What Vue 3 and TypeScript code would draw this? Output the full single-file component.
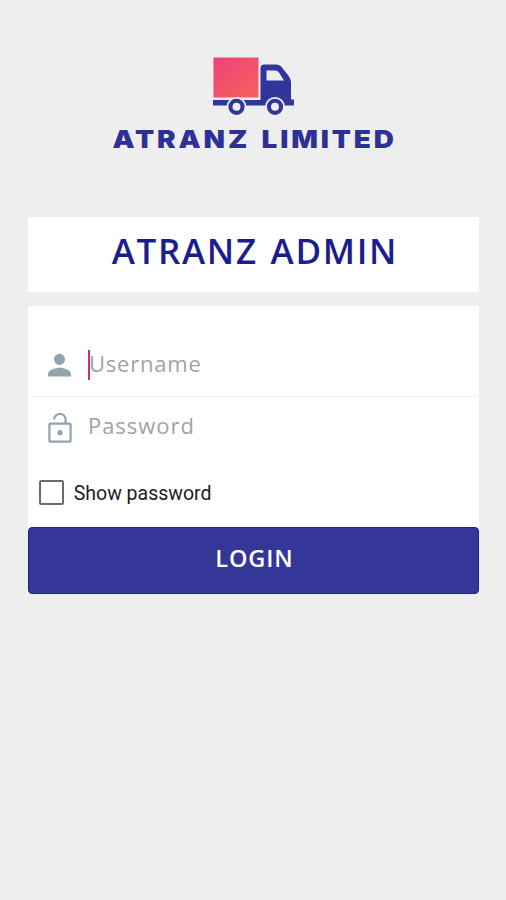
<script setup lang="ts">
import { ref } from 'vue'

const username = ref('')
const password = ref('')
const showPassword = ref(false)
</script>

<template>
  <main class="screen">
    <header class="brand">
      <svg class="truck" viewBox="0 0 84 60" aria-hidden="true">
        <defs>
          <linearGradient id="cargo" x1="0" y1="0" x2="1" y2="1">
            <stop offset="0" stop-color="#ef4079" />
            <stop offset="1" stop-color="#f4645b" />
          </linearGradient>
        </defs>
        <rect x="1.500" y="0.500" width="45" height="40" fill="url(#cargo)" />
        <path
          fill="#30369a"
          fill-rule="evenodd"
          d="M1 43H48.500V11.500Q48.500 7.500 52.500 7.500H64Q68 7.500 70 10.500L77 19.500Q79 22.500 79 25V42.500H82V48.500H1ZM54.500 13.500V23.500H72L67 15.500Q65.500 13.500 63 13.500Z"
        />
        <g fill="#30369a" stroke="#eee" stroke-width="1.800">
          <circle cx="24.500" cy="49.800" r="9" />
          <circle cx="63" cy="49.800" r="9" />
        </g>
        <circle cx="24.500" cy="49.800" r="4" fill="#eee" />
        <circle cx="63" cy="49.800" r="4" fill="#eee" />
      </svg>
      <div class="brand-name">ATRANZ LIMITED</div>
    </header>

    <h1 class="title">ATRANZ ADMIN</h1>

    <form class="form" @submit.prevent>
      <label class="field user">
        <svg class="icon" viewBox="0 0 24 24" aria-hidden="true">
          <path fill="#8fa4ad" d="M12 11.500a4.600 4.600 0 1 0 0-9.200 4.600 4.600 0 0 0 0 9.200ZM2.500 21.200v-2c0-3.600 6.200-5.300 9.500-5.300s9.500 1.700 9.500 5.300v2Z" />
        </svg>
        <span class="caret"></span>
        <input v-model="username" class="input" type="text" placeholder="Username" />
      </label>
      <label class="field pass">
        <svg class="lock" viewBox="0 0 24 30" aria-hidden="true">
          <g fill="none" stroke="#8fa4ad" stroke-width="2.200">
            <rect x="1.400" y="10.700" width="21.200" height="18" rx="1.500" />
            <path d="M6.200 6.600a5.700 5.700 0 0 1 11.400 0V10.500" />
          </g>
          <circle cx="12" cy="19.700" r="2.600" fill="#8fa4ad" />
        </svg>
        <input v-model="password" class="input pw" :type="showPassword ? 'text' : 'password'" placeholder="Password" />
      </label>
      <label class="show">
        <input v-model="showPassword" class="check" type="checkbox" />
        <span class="show-text">Show password</span>
      </label>
      <button class="login" type="submit">LOGIN</button>
    </form>
  </main>
</template>

<style>
body {
  background: #eee;
}
</style>

<style scoped>
.screen {
  box-sizing: border-box;
  width: 506px;
  height: 900px;
  padding: 57px 27.500px 0 28.400px;
  overflow: hidden;
  background: #eee;
  font-family: "Open Sans", sans-serif;
}
.brand {
  height: 160px;
  display: flex;
  flex-direction: column;
  align-items: center;
}
.truck {
  width: 84px;
  height: 60px;
  margin-left: 2px;
  flex: none;
}
.brand-name {
  margin-top: 7px;
  padding-left: 3px;
  white-space: nowrap;
  font: 900 25px/30px Inter, sans-serif;
  letter-spacing: 2.600px;
  word-spacing: 2.600px;
  transform: scaleX(1.115);
  color: #2d3197;
}
.title {
  box-sizing: border-box;
  height: 75px;
  margin: 0 0 14px;
  padding: 9px 0 0 3px;
  background: #fff;
  text-align: center;
  white-space: nowrap;
  font-size: 35px;
  line-height: 50px;
  font-weight: 600;
  letter-spacing: 1.700px;
  word-spacing: 2px;
  color: #1c1d8c;
}
.form {
  display: flex;
  flex-direction: column;
  background: #fff;
}
.field {
  box-sizing: border-box;
  display: flex;
  align-items: center;
  padding-left: 17px;
}
.user {
  height: 91px;
  padding-top: 27px;
  border-bottom: 1px solid #f0f0f0;
}
.pass {
  height: 61px;
}
.icon {
  width: 29px;
  height: 29px;
  margin-top: 1px;
  flex: none;
}
.lock {
  width: 24px;
  height: 30px;
  margin: 0 2.500px;
  flex: none;
}
.caret {
  width: 2px;
  height: 30px;
  margin-left: 13.500px;
  background: #e0256f;
}
.input {
  width: 300px;
  height: 36px;
  padding: 0;
  border: 0;
  outline: 0;
  margin: 0 0 3px -1px;
  background: transparent;
  font: 400 22px/36px "Open Sans", sans-serif;
  letter-spacing: 0.800px;
  color: #444;
}
.pw {
  margin-left: 13.500px;
  margin-bottom: 5px;
  letter-spacing: 1px;
}
.input::placeholder {
  color: #a5a1a0;
  opacity: 1;
}
.show {
  height: 69px;
  display: flex;
  align-items: center;
  padding-left: 10.300px;
}
.check {
  appearance: none;
  box-sizing: border-box;
  width: 25px;
  height: 25px;
  margin: 0;
  border: 2px solid #6c6c6c;
  border-radius: 2px;
}
.show-text {
  margin-left: 10px;
  padding-top: 3px;
  font: 400 19.500px/24px Roboto, sans-serif;
  color: #1c1c1c;
}
.login {
  height: 67px;
  padding: 0 0 5px 2px;
  border: 1px solid #20228b;
  border-radius: 4px;
  background: #343797;
  color: #fff;
  font: 600 23.500px/30px "Open Sans", sans-serif;
  letter-spacing: 0.900px;
}
</style>
